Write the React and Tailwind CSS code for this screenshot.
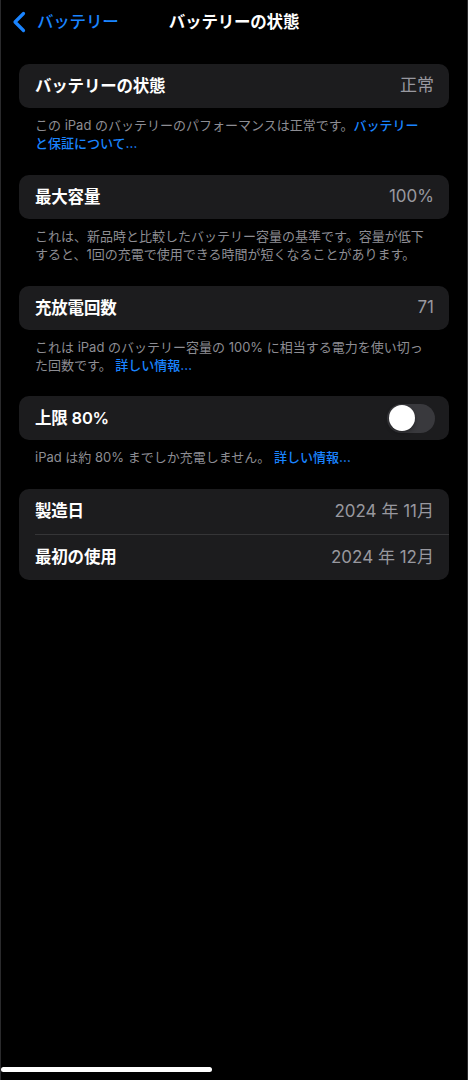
export default function App() {
  return (
    <div className="relative min-h-[1080px] w-[468px] overflow-hidden border-x border-[#2a2a2c] bg-black font-['Inter','Noto_Sans_CJK_JP',sans-serif] text-white">
      {/* Nav bar */}
      <header className="grid h-11 grid-cols-[1fr_auto_1fr] items-center">
        <div className="flex items-center gap-[11px] pl-[11px] text-[#1a84ff]">
          <svg width="14" height="22" viewBox="0 0 14 22" fill="none">
            <path d="M11.5 2.5L3 11l8.5 8.5" stroke="currentColor" strokeWidth="3.2" strokeLinecap="round" strokeLinejoin="round" />
          </svg>
          <span className="text-[16.5px] font-medium tracking-[-0.2px]">バッテリー</span>
        </div>
        <h1 className="text-[16.5px] font-bold tracking-[-0.2px]">バッテリーの状態</h1>
        <div />
      </header>

      <main className="mt-5 flex flex-col gap-[23px] px-[18px]">
        <section>
          <Row label="バッテリーの状態" value="正常" single />
          <Note>
            <span className="block">
              この iPad のバッテリーのパフォーマンスは正常です。<Link>バッテリー</Link>
            </span>
            <Link>と保証について…</Link>
          </Note>
        </section>

        <section>
          <Row label="最大容量" value="100%" single />
          <Note>
            <span className="block">これは、新品時と比較したバッテリー容量の基準です。容量が低下</span>
            <span className="block">すると、1回の充電で使用できる時間が短くなることがあります。</span>
          </Note>
        </section>

        <section>
          <Row label="充放電回数" value="71" single />
          <Note>
            <span className="block">これは iPad のバッテリー容量の 100% に相当する電力を使い切っ</span>
            <span className="block">
              た回数です。 <Link>詳しい情報…</Link>
            </span>
          </Note>
        </section>

        <section className="-mt-px">
          <div className="flex h-11 items-center justify-between rounded-[10px] bg-[#1c1c1e] pl-4 pr-[14px]">
            <span className="text-[16.5px] font-semibold tracking-[-0.2px]">上限 80%</span>
            <div className="flex h-[29px] w-[48px] items-center rounded-full bg-[#39393d] px-[2px]">
              <div className="h-[26px] w-[26px] rounded-full bg-white shadow-[0_2px_4px_rgba(0,0,0,0.35)]" />
            </div>
          </div>
          <Note>
            <span className="block">
              iPad は約 80% までしか充電しません。 <Link>詳しい情報…</Link>
            </span>
          </Note>
        </section>

        <section className="overflow-hidden rounded-[10px] bg-[#1c1c1e]">
          <Row label="製造日" value="2024 年 11月" />
          <div className="ml-4 h-px bg-[#353537]" />
          <Row label="最初の使用" value="2024 年 12月" />
        </section>
      </main>

      {/* home indicator */}
      <div className="absolute bottom-[8px] left-0 h-[5px] w-[211px] rounded-full bg-white" />
    </div>
  )
}

function Row({ label, value, single }) {
  return (
    <div
      className={
        single
          ? 'flex h-11 items-center justify-between rounded-[10px] bg-[#1c1c1e] pl-4 pr-[15px]'
          : 'flex h-[45px] items-center justify-between pl-4 pr-[15px]'
      }
    >
      <span className="text-[16.5px] font-semibold tracking-[-0.2px]">{label}</span>
      <span className="text-[17px] tracking-[0px] text-[#98989f]">{value}</span>
    </div>
  )
}

function Note({ children }) {
  return (
    <p className="whitespace-nowrap px-4 pt-2 text-[13px] leading-[18px] text-[#8d8d93]">
      {children}
    </p>
  )
}

function Link({ children }) {
  return <span className="font-medium text-[#1a84ff]">{children}</span>
}
